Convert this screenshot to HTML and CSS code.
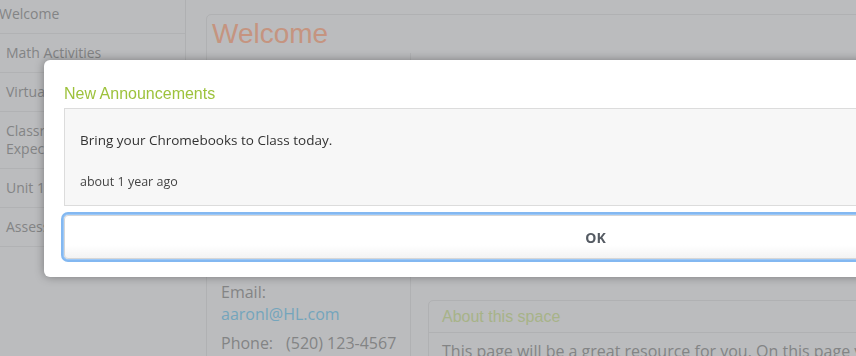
FILE: index.html
```html
<!DOCTYPE html>
<html lang="en">
<head>
<meta charset="utf-8">
<title>Welcome</title>
<link rel="stylesheet" href="styles.css">
</head>
<body>
<div class="page">
  <nav class="sidebar">
    <ul class="nav-list">
      <li class="nav-item top">Welcome</li>
      <li class="nav-item">Math Activities</li>
      <li class="nav-item">Virtual Field Trips</li>
      <li class="nav-item">Classroom Procedures &amp; Expectations</li>
      <li class="nav-item">Unit 1: Place Value</li>
      <li class="nav-item">Assessments</li>
    </ul>
  </nav>
  <main class="panel">
    <h1 class="panel-title">Welcome</h1>
    <div class="columns">
      <div class="contact">
        <div class="photo"></div>
        <div class="contact-line">Email:</div>
        <div class="contact-line"><a class="link" href="#">aaronl@HL.com</a></div>
        <div class="contact-line phone"><span class="label">Phone:</span>(520) 123-4567</div>
      </div>
      <div class="content">
        <div class="video"></div>
        <section class="about">
          <h2 class="about-title">About this space</h2>
          <p class="about-body">This page will be a great resource for you. On this page you will find everything you need for class.</p>
        </section>
      </div>
    </div>
  </main>
</div>

<div class="modal" role="dialog">
  <h3 class="modal-title">New Announcements</h3>
  <div class="announcement">
    <p class="announcement-text">Bring your Chromebooks to Class today.</p>
    <p class="announcement-time">about 1 year ago</p>
  </div>
  <button class="ok-button" type="button">OK</button>
</div>
</body>
</html>
```

FILE: styles.css
```css
* { box-sizing: border-box; }

html, body {
  margin: 0;
  padding: 0;
  width: 856px;
  height: 356px;
  overflow: hidden;
  background: #bbbcbe;
  font-family: "Open Sans", "DejaVu Sans", sans-serif;
}

.page {
  display: flex;
  gap: 20px;
  align-items: flex-start;
}

.sidebar {
  width: 186px;
  flex: none;
}

.nav-list {
  list-style: none;
  margin: -5px 0 0 0;
  padding: 0;
  border-right: 1px solid #afb0b2;
}

.nav-item {
  padding: 10px 4px 10px 6px;
  line-height: 18px;
  font-size: 14px;
  color: #838485;
  border-bottom: 1px solid #b1b2b4;
  overflow: hidden;
}

.nav-item.top {
  padding-left: 0;
  text-indent: -1px;
}

.panel {
  flex: none;
  width: 1000px;
  height: 600px;
  margin-top: 14px;
  border: 1px solid #b0b1b3;
  border-radius: 5px;
}

.panel-title {
  margin: 0;
  padding: 3px 5px;
  font-family: "Liberation Sans", Arial, sans-serif;
  font-weight: normal;
  font-size: 28px;
  line-height: 32px;
  color: #c59480;
}

.columns {
  display: flex;
}

.contact {
  width: 204px;
  flex: none;
  padding: 0 0 0 14px;
  border-right: 1px solid #b0b1b3;
  color: #838485;
  font-size: 16px;
}

.photo {
  height: 228px;
}

.contact-line {
  line-height: 22px;
}

.contact-line.phone {
  margin-top: 7px;
}

.label {
  margin-right: 13px;
}

.link {
  color: #74a5bc;
  text-decoration: none;
}

.content {
  flex: 1;
  padding-left: 17px;
}

.video {
  height: 247px;
}

.about {
  border: 1px solid #b0b1b3;
  border-radius: 5px;
}

.about-title {
  margin: 0;
  padding: 6px 13px 5px;
  font-family: "Liberation Sans", Arial, sans-serif;
  font-weight: normal;
  font-size: 16px;
  line-height: 20px;
  color: #a7b388;
  border-bottom: 1px solid #b0b1b3;
}

.about-body {
  margin: 0;
  padding: 7px 13px;
  font-size: 16px;
  line-height: 22px;
  color: #838485;
  white-space: nowrap;
}

.modal {
  position: fixed;
  left: 44px;
  top: 60px;
  width: 1103px;
  background: #fff;
  border-radius: 6px;
  box-shadow: 0 0 10px rgba(0, 0, 0, 0.35);
  padding: 24px 20px 18px;
}

.modal-title {
  margin: 0 0 4px;
  font-family: "Liberation Sans", Arial, sans-serif;
  font-weight: normal;
  font-size: 16px;
  line-height: 20px;
  color: #9dc23c;
}

.announcement {
  background: #f7f7f7;
  border: 1px solid #dcdcdc;
  padding: 22px 15px 14px;
}

.announcement-text {
  margin: 0 0 24px;
  font-size: 13.5px;
  line-height: 18px;
  color: #333;
}

.announcement-time {
  margin: 0;
  font-size: 12.5px;
  line-height: 18px;
  color: #444;
}

.ok-button {
  display: block;
  width: 100%;
  margin-top: 9px;
  height: 44px;
  border: 1px solid #d6d6d6;
  border-radius: 4px;
  background: linear-gradient(#fff 0%, #fff 70%, #f3f3f3 100%);
  box-shadow: 0 0 0 1px #9cc8f7, 0 0 0 3px #83b8f1;
  font-family: "Open Sans", "DejaVu Sans", sans-serif;
  font-weight: bold;
  font-size: 14px;
  color: #555b63;
  padding: 0;
}
```
